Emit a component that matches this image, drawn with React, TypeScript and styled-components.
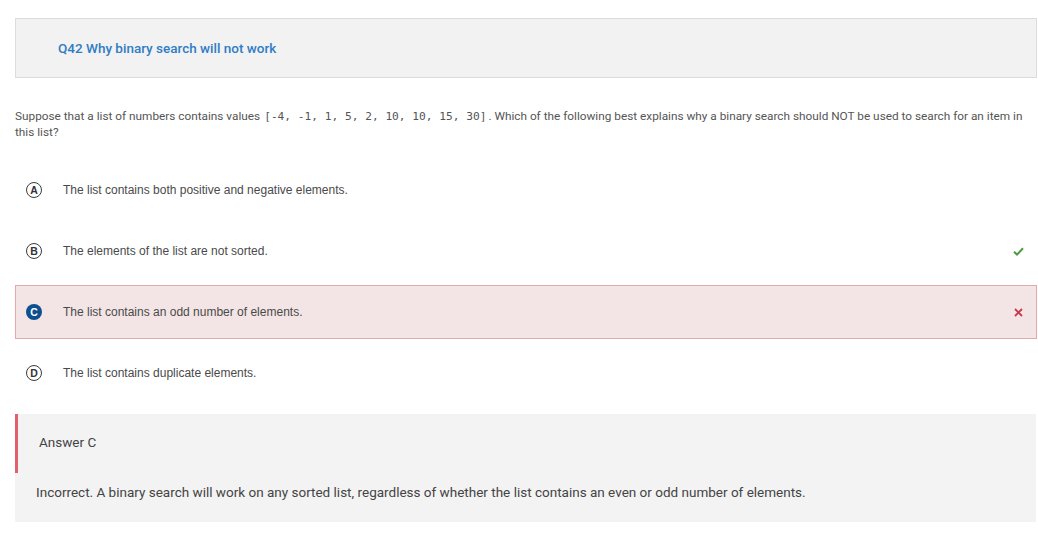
import React from "react";
import styled, { createGlobalStyle } from "styled-components";

const Global = createGlobalStyle`
  html, body { margin: 0; padding: 0; background: #ffffff; }
  body { font-family: Roboto, "Liberation Sans", sans-serif; }
`;

const Page = styled.div`
  width: 1038px;
  height: 539px;
  overflow: hidden;
  box-sizing: border-box;
  padding: 18px 1px 0 15px;
  display: flex;
  flex-direction: column;
`;

const Header = styled.div`
  height: 60px;
  flex: none;
  box-sizing: border-box;
  background: #f2f2f2;
  border: 1px solid #dcdcdc;
  display: flex;
  align-items: center;
  padding-left: 42px;
`;

const Title = styled.h2`
  margin: 0;
  font-family: Roboto, sans-serif;
  font-weight: 500;
  font-size: 13.5px;
  color: #2f7dc4;
`;

const Question = styled.p`
  margin: 30px 0 0 0;
  font-family: Roboto, sans-serif;
  font-size: 11.8px;
  line-height: 16px;
  color: #555555;
`;

const Code = styled.code`
  font-family: "DejaVu Sans Mono", "Liberation Mono", monospace;
  font-size: 11.2px;
  line-height: 1;
  color: #555555;
  padding: 0 2px 0 4px;
`;

const Options = styled.div`
  margin-top: 23px;
  display: flex;
  flex-direction: column;
  gap: 7px;
`;

const Option = styled.div<{ $wrong?: boolean }>`
  height: 54px;
  flex: none;
  box-sizing: border-box;
  display: flex;
  align-items: center;
  padding: 0 12px 0 10px;
  background: ${(p) => (p.$wrong ? "#f3e5e5" : "transparent")};
  border: 1px solid ${(p) => (p.$wrong ? "#e4a9ac" : "transparent")};
`;

const Letter = styled.span<{ $selected?: boolean }>`
  width: 16px;
  height: 16px;
  box-sizing: border-box;
  border-radius: 50%;
  display: flex;
  align-items: center;
  justify-content: center;
  flex: none;
  font-family: "Liberation Sans", Arial, sans-serif;
  font-weight: 700;
  font-size: 10.5px;
  color: ${(p) => (p.$selected ? "#ffffff" : "#333333")};
  background: ${(p) => (p.$selected ? "#0d4f8f" : "#ffffff")};
  border: ${(p) => (p.$selected ? "none" : "1.5px solid #3a3a3a")};
`;

const OptionText = styled.span`
  margin-left: 21px;
  flex: 1;
  font-family: "Liberation Sans", Arial, sans-serif;
  font-size: 12px;
  color: #4a4a4a;
`;

const Mark = styled.span`
  width: 12px;
  display: flex;
  justify-content: center;
`;

const AnswerBox = styled.div`
  margin-top: 14px;
  margin-right: 1px;
  height: 108px;
  flex: none;
  background: #f3f3f3;
  display: flex;
  flex-direction: column;
`;

const AnswerHead = styled.div`
  height: 59px;
  box-sizing: border-box;
  border-left: 3px solid #e0606e;
  display: flex;
  align-items: center;
  padding: 0 0 3px 21px;
  font-family: Roboto, sans-serif;
  font-size: 13.5px;
  color: #444444;
`;

const Explanation = styled.div`
  padding: 11px 0 0 21px;
  font-family: Roboto, sans-serif;
  font-size: 13.5px;
  line-height: 16px;
  color: #444444;
`;

const Check = () => (
  <svg width="11" height="9" viewBox="0 0 11 9">
    <path d="M1 4.8 L4 7.6 L10 1.2" fill="none" stroke="#4a9a3f" strokeWidth="2" />
  </svg>
);

const Cross = () => (
  <svg width="9" height="9" viewBox="0 0 9 9">
    <path d="M1 1 L8 8 M8 1 L1 8" fill="none" stroke="#c9374a" strokeWidth="1.8" />
  </svg>
);

const options = [
  { l: "A", t: "The list contains both positive and negative elements." },
  { l: "B", t: "The elements of the list are not sorted.", correct: true },
  { l: "C", t: "The list contains an odd number of elements.", wrong: true },
  { l: "D", t: "The list contains duplicate elements." },
];

export default function App() {
  return (
    <>
      <Global />
      <Page>
        <Header>
          <Title>Q42 Why binary search will not work</Title>
        </Header>
        <Question>
          Suppose that a list of numbers contains values
          <Code>[-4, -1, 1, 5, 2, 10, 10, 15, 30]</Code>. Which of the following best
          explains why a binary search should NOT be used to search for an item in this
          list?
        </Question>
        <Options>
          {options.map((o) => (
            <Option key={o.l} $wrong={o.wrong}>
              <Letter $selected={o.wrong}>{o.l}</Letter>
              <OptionText>{o.t}</OptionText>
              <Mark>{o.correct ? <Check /> : o.wrong ? <Cross /> : null}</Mark>
            </Option>
          ))}
        </Options>
        <AnswerBox>
          <AnswerHead>Answer C</AnswerHead>
          <Explanation>
            Incorrect. A binary search will work on any sorted list, regardless of whether
            the list contains an even or odd number of elements.
          </Explanation>
        </AnswerBox>
      </Page>
    </>
  );
}
